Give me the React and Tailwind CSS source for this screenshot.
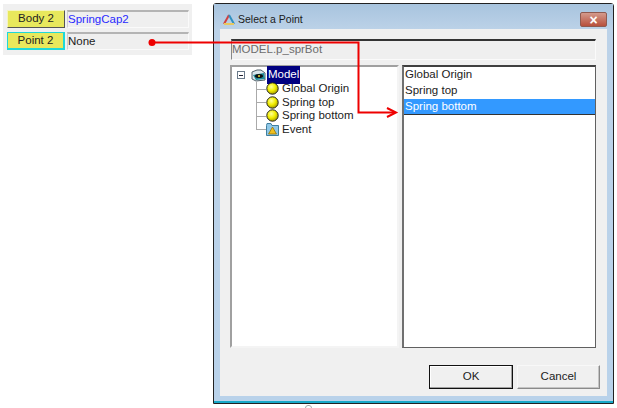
import React from 'react';

const uiFont = "font-['Liberation_Sans',Arial,sans-serif]";

function PropButton({ label, active }) {
  return (
    <div
      className={`w-[58px] flex items-center justify-center bg-[#e8e85c] text-[11.5px] text-[#222] border-t border-l ${
        active ? 'h-[18px] border-2 border-[#1fd8d8]' : 'h-[18px] border-t-[#f4f4c0] border-l-[#f4f4c0] border-r border-b border-r-[#555] border-b-[#555]'
      }`}
    >
      {label}
    </div>
  );
}

function PropField({ value, color }) {
  return (
    <div className={`w-[122px] h-[18px] flex items-center text-[11.5px] bg-[#efefef] border-t-2 border-t-[#b4b4b4] border-b border-b-[#fafafa] border-l border-l-[#cfcfcf] border-r border-r-[#fafafa] ${color}`}>
      {value}
    </div>
  );
}

function Ball() {
  return (
    <svg width="13" height="13" viewBox="0 0 13 13" className="shrink-0">
      <defs>
        <radialGradient id="ball" cx="40%" cy="35%" r="65%">
          <stop offset="0%" stopColor="#ffff9a" />
          <stop offset="55%" stopColor="#f2ee00" />
          <stop offset="100%" stopColor="#a8a000" />
        </radialGradient>
      </defs>
      <circle cx="6.5" cy="6.5" r="5.7" fill="url(#ball)" stroke="#222" strokeWidth="1" />
    </svg>
  );
}

function FolderIcon() {
  return (
    <svg width="13" height="13" viewBox="0 0 13 13" className="shrink-0">
      <path d="M0.5 2.5 L0.5 12.5 L12.5 12.5 L12.5 2.5 L6 2.5 L5 0.5 L1 0.5 Z" fill="#8fc8e8" stroke="#3f7f9f" />
      <path d="M6.5 4 L10.5 11 L2.5 11 Z" fill="#f0c020" stroke="#8a6a00" strokeWidth="0.7" />
    </svg>
  );
}

function ModelIcon() {
  return (
    <svg width="16" height="13" viewBox="0 0 16 13" className="shrink-0">
      <path d="M1 3 L6 1 L10 1 L14 4 L14 11 L5 12 L1 10 Z" fill="#d8e4ea" stroke="#50606a" />
      <path d="M2 6 L13 4 L14 10 L5 11 Z" fill="#1c8a9a" />
      <ellipse cx="8" cy="7" rx="4" ry="2" fill="#101010" />
      <circle cx="8" cy="7" r="1" fill="#e8e040" />
    </svg>
  );
}

function TreeRow({ icon, label }) {
  return (
    <div className="relative h-[13.5px] flex items-center gap-[3px] pl-[34px] text-[11.5px] text-[#222]">
      <span className="absolute left-[24px] top-1/2 w-[10px] border-t border-[#aaa]" />
      {icon}
      <span>{label}</span>
    </div>
  );
}

function WindowsButton({ label, isDefault }) {
  return (
    <div
      className={`h-[24px] flex items-center justify-center text-[11.5px] text-[#222] bg-[#f0f0f0] ${
        isDefault
          ? 'w-[84px] border border-[#111] shadow-[inset_-1px_-1px_0_#a0a0a0,inset_1px_1px_0_#fff]'
          : 'w-[83px] border border-[#f8f8f8] border-r-[#8a8a8a] border-b-[#8a8a8a] shadow-[inset_-1px_-1px_0_#c4c4c4]'
      }`}
    >
      {label}
    </div>
  );
}

export default function App() {
  return (
    <div className={`relative w-[617px] h-[408px] bg-white overflow-hidden ${uiFont}`}>
      {/* property panel */}
      <div className="absolute left-[3px] top-[4px] w-[189px] h-[51px] bg-[#f0f0f0] pl-[4px] pt-[6px] flex flex-col gap-[4px]">
        <div className="flex gap-[2px]">
          <PropButton label="Body 2" />
          <PropField value="SpringCap2" color="text-[#2a2aff]" />
        </div>
        <div className="flex gap-[2px]">
          <PropButton label="Point 2" active />
          <PropField value="None" color="text-[#222]" />
        </div>
      </div>

      {/* dialog window */}
      <div className="absolute left-[213px] top-[3px] w-[401px] h-[401px] border border-[#222] rounded-t-[3px]">
        <div className="h-full flex flex-col border-b-2 border-b-[#17a8c8] bg-[linear-gradient(180deg,#a8c4de_0px,#bcd2e8_26px,#b9d2ea_100%)] px-[6px] pb-[5px]">
          <div className="h-[25px] shrink-0 flex items-center relative pt-[6px]">
            <svg width="14" height="14" viewBox="0 0 14 14" className="ml-[2px] mr-[2px] shrink-0">
              <path d="M7 2 L2 11" stroke="#d04040" strokeWidth="2" fill="none" />
              <path d="M7 2 L12 11" stroke="#3090c0" strokeWidth="2" fill="none" />
              <path d="M2 11 L12 11" stroke="#e8c860" strokeWidth="2" fill="none" />
            </svg>
            <span className="text-[10.5px] text-[#1a1a1a]">Select a Point</span>
            <div className="absolute right-[0px] top-[8px] w-[27px] h-[15px] flex items-center justify-center rounded-[2px] border border-[#8f5a50] bg-[linear-gradient(180deg,#d49a8c,#b8503c)] text-white text-[14px] font-bold leading-none">
              ×
            </div>
          </div>

          <div className="flex-1 min-h-0 flex flex-col bg-[#f0f0f0] pt-[10px] pl-[10px] pr-[10px]">
            <div className="h-[21px] shrink-0 ml-[1px] w-[365px] flex items-center text-[11.5px] text-[#6d6d6d] bg-[#efefef] border-t-2 border-t-[#333] border-l border-l-[#888] border-r border-r-[#fafafa] border-b border-b-[#fafafa]">
              MODEL.p_sprBot
            </div>

            <div className="mt-[5px] h-[283px] flex gap-[3px]">
              <div className="w-[169px] bg-white border-l-2 border-t-2 border-l-[#a0a0a0] border-t-[#a0a0a0] border-r-2 border-b-2 border-r-[#f4f4f4] border-b-[#f4f4f4] pt-[1px] relative">
                <div className="relative h-[14px] flex items-center pl-[19px] text-[11.5px]">
                  <span className="absolute left-[5px] top-[3px] w-[8px] h-[8px] border border-[#6a7a8a] bg-white flex items-center justify-center">
                    <span className="w-[4px] h-px bg-[#223]" />
                  </span>
                  <ModelIcon />
                  <span className="px-px bg-[#000080] text-white">Model</span>
                </div>
                <span className="absolute left-[24px] top-[15px] h-[47px] border-l border-[#aaa]" />
                <TreeRow icon={<Ball />} label="Global Origin" />
                <TreeRow icon={<Ball />} label="Spring top" />
                <TreeRow icon={<Ball />} label="Spring bottom" />
                <TreeRow icon={<FolderIcon />} label="Event" />
              </div>

              <div className="w-[194px] bg-white border-l-2 border-t-2 border-l-[#707070] border-t-[#404040] border-r border-b border-r-[#606060] border-b-[#606060] text-[11.5px] text-[#222]">
                <div className="h-[16px] flex items-center pl-px">Global Origin</div>
                <div className="h-[16px] flex items-center pl-px">Spring top</div>
                <div className="h-[16px] flex items-center pl-px bg-[#3399ff] text-white border-b border-[#333]">Spring bottom</div>
              </div>
            </div>

            <div className="mt-[17px] flex justify-end gap-[4px] -mr-[3px]">
              <WindowsButton label="OK" isDefault />
              <WindowsButton label="Cancel" />
            </div>
          </div>
        </div>
      </div>

      {/* resize handle peeking out under the window */}
      <span className="absolute left-[305px] top-[405px] w-[7px] h-[5px] rounded-t-[3px] border border-[#aaa]" />

      {/* red callout arrow over both panels */}
      <svg className="absolute left-0 top-0 pointer-events-none" width="617" height="408">
        <circle cx="152" cy="42.5" r="3.5" fill="#ee0000" />
        <path d="M152 42.5 H358.5 V112.5 H394" fill="none" stroke="#ee0000" strokeWidth="2" />
        <path d="M387 108 L396 112.5 L387 117" fill="none" stroke="#ee0000" strokeWidth="2" />
      </svg>
    </div>
  );
}
